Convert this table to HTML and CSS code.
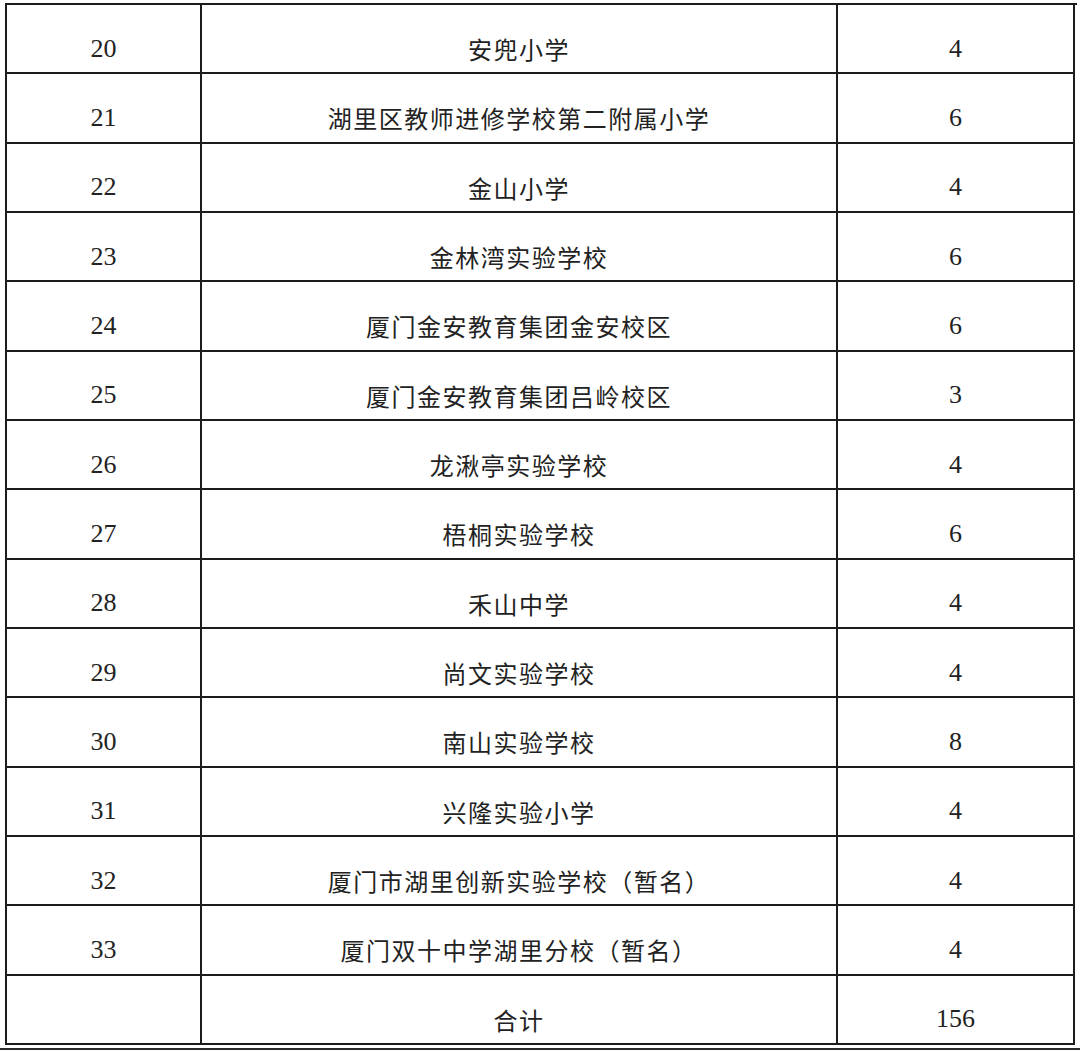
FILE: index.html
```html
<!DOCTYPE html>
<html lang="zh-CN">
<head>
<meta charset="utf-8">
<link rel="stylesheet" href="styles.css">
</head>
<body>
<div class="sheet">
  <div class="grid">
    <div class="c num">20</div><div class="c name">安兜小学</div><div class="c num">4</div>
    <div class="c num">21</div><div class="c name">湖里区教师进修学校第二附属小学</div><div class="c num">6</div>
    <div class="c num">22</div><div class="c name">金山小学</div><div class="c num">4</div>
    <div class="c num">23</div><div class="c name">金林湾实验学校</div><div class="c num">6</div>
    <div class="c num">24</div><div class="c name">厦门金安教育集团金安校区</div><div class="c num">6</div>
    <div class="c num">25</div><div class="c name">厦门金安教育集团吕岭校区</div><div class="c num">3</div>
    <div class="c num">26</div><div class="c name">龙湫亭实验学校</div><div class="c num">4</div>
    <div class="c num">27</div><div class="c name">梧桐实验学校</div><div class="c num">6</div>
    <div class="c num">28</div><div class="c name">禾山中学</div><div class="c num">4</div>
    <div class="c num">29</div><div class="c name">尚文实验学校</div><div class="c num">4</div>
    <div class="c num">30</div><div class="c name">南山实验学校</div><div class="c num">8</div>
    <div class="c num">31</div><div class="c name">兴隆实验小学</div><div class="c num">4</div>
    <div class="c num">32</div><div class="c name">厦门市湖里创新实验学校（暂名）</div><div class="c num">4</div>
    <div class="c num">33</div><div class="c name">厦门双十中学湖里分校（暂名）</div><div class="c num">4</div>
    <div class="c num"></div><div class="c name">合计</div><div class="c num">156</div>
  </div>
  <div class="rule"></div>
</div>
</body>
</html>
```

FILE: styles.css
```css
html, body {
  margin: 0;
  padding: 0;
  background: #ffffff;
}
.sheet {
  width: 1080px;
  height: 1051px;
  padding-top: 3px;
  box-sizing: border-box;
}
.grid {
  margin-left: 5px;
  width: 1070px;
  display: grid;
  grid-template-columns: 195px 636px 237px;
  grid-template-rows: repeat(15, 69.33px);
  border-top: 2px solid #1c1c1c;
  border-left: 2px solid #1c1c1c;
}
.c {
  box-sizing: border-box;
  border-right: 2px solid #1c1c1c;
  border-bottom: 2px solid #1c1c1c;
  display: flex;
  align-items: center;
  justify-content: center;
  padding-top: 20px;
  color: #222222;
}
.num {
  font-family: "Liberation Serif", "Times New Roman", serif;
  font-size: 26px;
}
.name {
  font-family: "Noto Sans CJK SC", "Noto Sans", sans-serif;
  font-size: 24px;
  letter-spacing: 1.5px;
  font-weight: 400;
}
.rule {
  margin-top: 3px;
  height: 2px;
  background: #2a2a2a;
}
```
